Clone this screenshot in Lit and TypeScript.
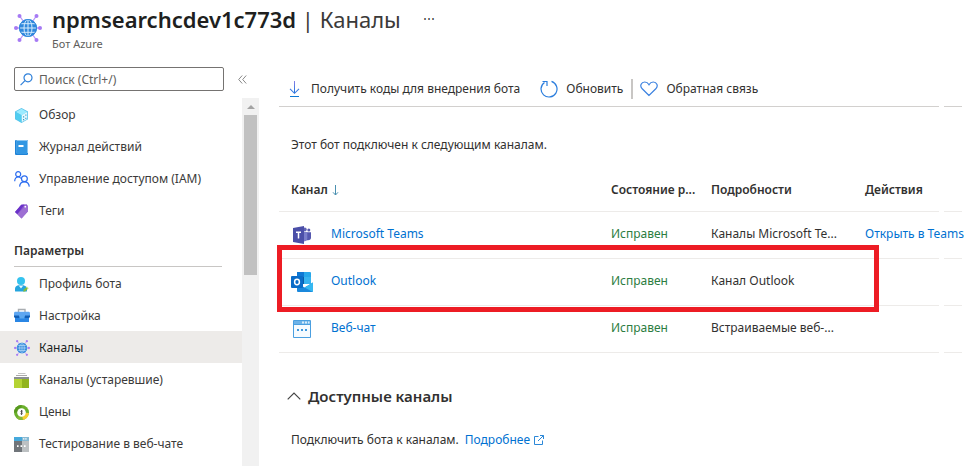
import { LitElement, html, svg, css, TemplateResult } from "lit";
import { customElement } from "lit/decorators.js";
import { classMap } from "lit/directives/class-map.js";

const icon = (size: number, box: number, body: TemplateResult) =>
  html`<svg width=${size} height=${size} viewBox="0 0 ${box} ${box}" aria-hidden="true">${body}</svg>`;

const network = svg`
  <g stroke="#b796f9" stroke-width="1.3">
    <path d="M6 2.5 22 25.5M22 2.5 6 25.5M2 14H26"/>
  </g>
  <g fill="#a67af4">
    <circle cx="5.5" cy="2" r="2"/><circle cx="22.5" cy="2" r="2"/>
    <circle cx="2" cy="14" r="2"/><circle cx="26" cy="14" r="2"/>
    <circle cx="5.5" cy="26" r="2"/><circle cx="22.5" cy="26" r="2"/>
  </g>
  <circle cx="14" cy="14" r="9" fill="#2f88dc"/>
  <g fill="none" stroke="#d5ecfc" stroke-width="1">
    <ellipse cx="14" cy="14" rx="4" ry="8.3"/>
    <path d="M14 5.5V22.5M5.5 14H22.5M7 9.7H21M7 18.3H21"/>
  </g>
  <circle cx="14" cy="14" r="8.5" fill="none" stroke="#2f88dc"/>`;

const icons: Record<string, TemplateResult> = {
  overview: icon(15, 15, svg`
    <path d="M7.5 0 14 3.6V11.3L7.5 15 1 11.3V3.6Z" fill="#59c3ea"/>
    <path d="M7.5.8 13.2 4 7.5 7.2 1.8 4Z" fill="#9cebff"/>
    <path d="M7.5 7.2 13.2 4V11L7.5 14.2Z" fill="#e6f8fd"/>
    <path d="M1.8 4 7.5 7.2V14.2L1.8 11Z" fill="#50cdf0"/>
    <path d="M9 8.3h1.2v1.2H9zM11.3 6.6h1.1v1.2h-1.1zM9 11h1.2v1.2H9zM11.3 9.7h1.1v1.2h-1.1z" fill="#3a9cc8"/>`),
  log: icon(15, 15, svg`
    <rect x="1" y="0" width="13" height="15" rx="1" fill="#1f83d6"/>
    <path d="M2.5 0H13Q14 0 14 1V13H2.5Z" fill="#8cc6f0"/>
    <path d="M2.5 1H13V14H2.5Z" fill="#3297e3"/>
    <path d="M4.5 5H9.5V7H4.5Z" fill="#fff"/>`),
  access: icon(16, 16, svg`
    <g fill="none" stroke="#2b6cf0" stroke-width="1.2">
      <circle cx="4.2" cy="3.2" r="2.5"/><path d="M.7 10.3C.8 7.5 2 6 4.2 6c1.2 0 2.1.5 2.8 1.3"/>
      <circle cx="10.4" cy="7.8" r="2.9"/><path d="M5.6 15.6c.2-3 1.8-4.8 4.7-4.8s4.7 1.8 5 4.8"/>
    </g>`),
  tags: icon(15, 15, svg`
    <path d="M1 8 7.3.8 12.6.3 14 2 13.8 7.5 7.5 14.5Z" fill="#8c5bce"/>
    <path d="M1 8 7.3.8 10.5.5 3.4 10.2Z" fill="#6a32c9"/>
    <path d="M3.5 9.9 11 2.6 14 2 13.8 7.5 7.5 14.5Z" fill="#9d6fd3"/>
    <circle cx="11.3" cy="2.7" r=".9" fill="#fff"/>`),
  profile: icon(15, 15, svg`
    <path d="M1 14V12C1 9.4 3.2 8 7 8s6 1.6 6 4v2q0 .5-.7.5H1.7Q1 14.5 1 14Z" fill="#25a5de"/>
    <circle cx="7" cy="4" r="4" fill="#35c3ef"/>
    <path d="M4.7 8.4 7 11.5 9.3 8.4Z" fill="#e8f8fd"/>
    <path d="M9.2 14.8 9.8 12.5 12.8 9.7 14.5 11.3 11.4 14.2Z" fill="#86bd3a"/>
    <path d="M12.2 10.2 13 9.5 14.6 11.1 13.8 11.9Z" fill="#d8e8a0"/>`),
  config: icon(16, 16, svg`
    <path d="M4.5 4V1.5H11V4" fill="none" stroke="#a9adb1" stroke-width="1.4"/>
    <path d="M0 5.5Q0 3.8 1 3.8H15Q16 3.8 16 5.5V8H0Z" fill="#5da6f1"/>
    <path d="M1 8H15V14H1Z" fill="#2a86e4"/>
    <path d="M0 7.6H5V9.2H11V7.6H16V9L15 10H1L0 9Z" fill="#125fb6"/>
    <path d="M5.5 7.5H10.5V10.5H5.5Z" fill="#5ca8ee"/>`),
  channels: icon(16, 28, network),
  legacy: icon(15, 15, svg`
    <path d="M4 .5H11.5" stroke="#c4c4c4"/><path d="M2 2.5H13" stroke="#a9a9a9"/>
    <path d="M0 4H15V6H0Z" fill="#8a8f91"/><path d="M0 6H8V15H0Z" fill="#b4d334"/>
    <path d="M8 6H15V15H8Z" fill="#92b41e"/>`),
  prices: icon(15, 15, svg`
    <circle cx="7.5" cy="7.5" r="7.5" fill="#6bb02c"/>
    <path d="M7.5 7.5 15 8A7.5 7.5 0 0 1 7 15Z" fill="#f5ce2f"/>
    <path d="M0 7.5A7.5 7.5 0 0 1 7.5 0V7.5Z" fill="#57991f"/>
    <path d="M7.5 7.5 2.7 13.2A7.5 7.5 0 0 0 9 14.9Z" fill="#87b939"/>
    <circle cx="7.5" cy="7.5" r="4.3" fill="#fff"/>
    <path d="M8.7 6.2Q7.5 5.4 6.9 6.3c-.3 1.1 1.6 1 1.4 2.1Q7.7 9.3 6.5 8.7M7.6 5V10" fill="none" stroke="#333" stroke-width=".8"/>`),
  test: icon(15, 15, svg`
    <path d="M0 0H8V4H0Z" fill="#45a9dc"/><path d="M8 0H15V4H8Z" fill="#86b9d3"/>
    <path d="M0 4H8V15H0Z" fill="#70757a"/><path d="M8 4H15V15H8Z" fill="#bcc0c2"/>
    <path d="M9 1.2h1.4v1.4H9zM11.2 1.2h1.4v1.4h-1.4z" fill="#fff"/>
    <path d="M3 8.3h1.6v1.6H3zM6.5 8.3h1.6v1.6H6.5zM10 8.3h1.6v1.6H10z" fill="#fff"/>`),
  search: icon(13, 13, svg`
    <g fill="none" stroke="#2f80da" stroke-width="1.2"><circle cx="8" cy="4.8" r="4"/><path d="M5 7.6.6 12.2"/></g>`),
  download: icon(18, 18, svg`
    <defs><linearGradient id="down" x1="0" y1="0" x2="0" y2="1"><stop stop-color="#8a7ee8"/><stop offset="1" stop-color="#1878da"/></linearGradient></defs>
    <path d="M9 1H10V13H9Z" fill="url(#down)"/>
    <path d="M5 8.8 9.5 13.3 14 8.8" fill="none" stroke="#3d7ae0" stroke-width="1.1"/>
    <path d="M5 16.5H14" stroke="#0f78d4"/>`),
  refresh: icon(18, 18, svg`
    <g fill="none" stroke="#2a7ddd" stroke-width="1.2"><path d="M11.5 1.4A8 8 0 1 1 4.5 2.4"/><path d="M2.5 1.5H7V6"/></g>`),
  heart: icon(18, 18, svg`
    <path d="M9 15.5 2.2 8.8C-.8 5.5 1.5 2 4.7 2 6.7 2 8 3 9 4.7 10 3 11.3 2 13.3 2 16.5 2 18.8 5.5 15.8 8.8Z" fill="none" stroke="#3c82e0" stroke-width="1.2"/>`),
  teams: icon(20, 20, svg`
    <circle cx="13.8" cy="4.5" r="1.9" fill="#6264b4"/><circle cx="17.8" cy="5" r="1.5" fill="#5558af"/>
    <path d="M12 7.3H20V12.5Q20 15.3 17 15.3H12Z" fill="#5558af"/>
    <path d="M12 7.3H16.3V13.5Q16.3 16.5 12 16.5Z" fill="#7b7fcb"/>
    <path d="M2 3 13 1V19L2 17Z" fill="#4b4fa8"/>
    <path d="M5 7.2H10M7.5 7.2V13.5" stroke="#fff" stroke-width="1.5" fill="none"/>`),
  outlook: icon(22, 22, svg`
    <path d="M6 2Q6 1 7 1H19Q20 1 20 2V13H6Z" fill="#28a8ea"/>
    <path d="M6 1H13V6H6Z" fill="#0f78d4"/><path d="M6 6H13V13H6Z" fill="#0a5ea8"/>
    <path d="M13 6H20V13H13Z" fill="#38b4f0"/>
    <path d="M6 12 13.5 16.5 22 11.5V20Q22 21 21 21H7Q6 21 6 20Z" fill="#1a88dc"/>
    <path d="M13.5 16.5 22 11.5V20Q22 20.5 21.5 20.8Z" fill="#35b8f1"/>
    <rect x="0" y="5" width="12" height="12" rx="1" fill="#0a6cc8"/>
    <ellipse cx="6" cy="11" rx="2.4" ry="2.7" fill="none" stroke="#fff" stroke-width="1.5"/>`),
  webchat: icon(20, 20, svg`
    <path d="M2.500 1.500H19.500V18.500H2.500Z" fill="#f6fbff" stroke="#4a9fe0"/>
    <path d="M3 2H19V5H3Z" fill="#6cb2e8"/><path d="M11 2.500h2v2h-2zM14 2.500h2v2h-2zM17 2.500h1.500v2H17z" fill="#d8edfb"/>
    <path d="M2 5.500H20" stroke="#4a9fe0"/>
    <path d="M6 10h2v2H6zM10 10h2v2h-2zM14 10h2v2h-2z" fill="#3f98dd"/>`),
  chevron: icon(14, 14, svg`<path d="M.7 10.3 7 4 13.3 10.3" fill="none" stroke="#444" stroke-width="1.2"/>`),
  external: icon(10, 10, svg`
    <path d="M4.5 1.5H.5V9.5H8.5V5.5M6 .5H9.5V4M9.5.5 4 6" fill="none" stroke="#2b88d8"/>`),
  collapse: icon(9, 9, svg`<path d="M4.2.5.7 4.5 4.2 8.5M8.2.5 4.7 4.5 8.2 8.5" fill="none" stroke="#888"/>`),
  sort: icon(12, 12, svg`<path d="M5.5 1V11M3 8.3 5.5 11 8 8.3" fill="none" stroke="#4a90b0"/>`),
};

const general = [
  ["overview", "Обзор"],
  ["log", "Журнал действий"],
  ["access", "Управление доступом (IAM)"],
  ["tags", "Теги"],
];
const settings = [
  ["profile", "Профиль бота"],
  ["config", "Настройка"],
  ["channels", "Каналы"],
  ["legacy", "Каналы (устаревшие)"],
  ["prices", "Цены"],
  ["test", "Тестирование в веб-чате"],
];
const channels = [
  { icon: "teams", name: "Microsoft Teams", details: "Каналы Microsoft Te...", action: "Открыть в Teams" },
  { icon: "outlook", name: "Outlook", details: "Канал Outlook", action: "" },
  { icon: "webchat", name: "Веб-чат", details: "Встраиваемые веб-...", action: "" },
];

@customElement("app-root")
export class AppRoot extends LitElement {
  static styles = css`
    :host {
      display: flex;
      flex-direction: column;
      min-height: 100vh;
      overflow: hidden;
      background: #fff;
      color: #323130;
      font: 12px/16px "Noto Sans", "Open Sans", sans-serif;
    }
    * { box-sizing: border-box; }
    svg { display: block; flex: none; }
    button { font: inherit; color: inherit; background: none; border: 0; padding: 0; }
    a { color: #0071d1; text-decoration: none; }
    h1, h2, p, ul { margin: 0; padding: 0; font-weight: 400; }
    ul { list-style: none; }

    .header { display: flex; height: 58px; padding: 4px 14px; gap: 10px; }
    .logo { padding-top: 10px; }
    .title-row { display: flex; align-items: center; gap: 20px; }
    .title { font-size: 22px; line-height: 30px; white-space: nowrap; color: #3b3a39; }
    .title b { font-weight: 600; color: #201f1e; }
    .more { height: 24px; width: 16px; }
    .subtitle { margin-top: 2px; font-size: 11px; color: #605e5c; }

    .body { display: flex; flex: 1; }
    .side { width: 259px; flex: none; display: flex; flex-direction: column; }
    .search-row { display: flex; align-items: center; gap: 14px; height: 40px; padding: 2px 0 0 14px; }
    .search { display: flex; align-items: center; gap: 6px; width: 210px; height: 24px; padding: 0 5px; border: 1px solid #757371; border-radius: 2px; }
    .search input { flex: 1; min-width: 0; border: 0; outline: 0; padding: 1px 0 0; background: none; font: inherit; color: #605e5c; }
    .search input::placeholder { color: #605e5c; opacity: 1; }
    .side-scroll { display: flex; flex: 1; }
    .nav { flex: 1; }
    .item { display: flex; align-items: center; height: 32px; padding: 2px 0 0 14px; color: #3b3a39; white-space: nowrap; }
    .item.on { background: #edebe9; color: #201f1e; }
    .glyph { width: 25px; flex: none; }
    .group { margin: 13px 20px 0 14px; height: 28px; font-size: 12px; line-height: 24px; font-weight: 600; border-bottom: 1px solid #c8c6c4; }
    .bar { width: 17px; background: #f1f1f1; display: flex; flex-direction: column; align-items: center; }
    .up { width: 0; height: 0; margin: 7px 0 6px; border: 4px solid transparent; border-top: 0; border-bottom-color: #a3a3a3; }
    .thumb { width: 13px; height: 160px; background: #c1c1c1; }

    .main { flex: 1; min-width: 0; padding: 12px 3px 0 20px; }
    .tools { display: flex; align-items: center; height: 36px; padding: 2px 0 0 6px; white-space: nowrap; }
    .tool { display: flex; align-items: center; gap: 8px; color: #323130; }
    .tool + .tool { margin-left: 20px; }
    .sep { width: 2px; height: 20px; margin: 0 7px 0 8px; background: #c8c6c4; }
    .rule { display: flex; gap: 5px; }
    .rule span { height: 1px; background: #d2d0ce; flex: 1; }
    .rule .end { flex: 0 0 18px; }
    .intro { padding: 30px 12px 15px; }
    .board { position: relative; }
    .grid { width: 100%; table-layout: fixed; border-collapse: collapse; text-align: left; }
    .grid th, .grid td { height: 47px; padding: 0 0 2px 12px; border-bottom: 1px solid #edebe9; white-space: nowrap; font-weight: 400; }
    .grid thead th { height: 43px; padding: 2px 0 0 12px; font-weight: 600; color: #323130; }
    .grid .gap { border: 0; padding: 0; }
    .c-state { width: 100px; }
    .c-details { width: 154px; }
    .c-actions { width: 86px; }
    .c-gap { width: 5px; }
    .c-end { width: 18px; }
    .sort { display: flex; align-items: center; gap: 2px; font-weight: 600; }
    .channel { display: flex; align-items: center; height: 24px; }
    .badge { width: 40px; display: flex; }
    .badge svg { margin-top: 2px; }
    .ok { color: #2c7d3f; }
    .mark { position: absolute; left: -2px; right: 83px; top: 77px; height: 67px; border: 5px solid #ed1c24; pointer-events: none; }
    .section { display: flex; align-items: center; gap: 7px; margin: 31px 0 24px 8px; font-size: 15px; line-height: 24px; font-weight: 600; }
    .more-text { display: flex; gap: 6px; padding-left: 12px; }
    .ext { display: flex; align-items: center; gap: 4px; }
  `;

  private items(list: string[][]) {
    return html`<ul>${list.map(([key, label]) => html`
      <li><a href="#${key}" class=${classMap({ item: true, on: key === "channels" })}>
        <span class="glyph">${icons[key]}</span>${label}</a></li>`)}</ul>`;
  }

  render() {
    return html`
      <header class="header">
        <div class="logo">${icon(28, 28, network)}</div>
        <div>
          <div class="title-row">
            <h1 class="title"><b>npmsearchcdev1c773d</b> | Каналы</h1>
            <button class="more" aria-label="Ещё">⋯</button>
          </div>
          <p class="subtitle">Бот Azure</p>
        </div>
      </header>
      <div class="body">
        <aside class="side">
          <div class="search-row">
            <label class="search">${icons.search}<input type="text" aria-label="Поиск" placeholder="Поиск (Ctrl+/)"></label>
            <button aria-label="Свернуть">${icons.collapse}</button>
          </div>
          <div class="side-scroll">
            <nav class="nav">
              ${this.items(general)}
              <h2 class="group">Параметры</h2>
              ${this.items(settings)}
            </nav>
            <div class="bar" aria-hidden="true"><span class="up"></span><span class="thumb"></span></div>
          </div>
        </aside>
        <main class="main">
          <div class="tools">
            <button class="tool">${icons.download}Получить коды для внедрения бота</button>
            <button class="tool">${icons.refresh}Обновить</button>
            <span class="sep"></span>
            <button class="tool">${icons.heart}Обратная связь</button>
          </div>
          <div class="rule"><span></span><span class="end"></span></div>
          <p class="intro">Этот бот подключен к следующим каналам.</p>
          <div class="board">
            <table class="grid">
              <colgroup><col><col class="c-state"><col class="c-details"><col class="c-actions"><col class="c-gap"><col class="c-end"></colgroup>
              <thead><tr>
                <th><button class="sort">Канал ${icons.sort}</button></th>
                <th>Состояние р...</th>
                <th>Подробности</th><th>Действия</th><th class="gap"></th><th></th>
              </tr></thead>
              <tbody>${channels.map((c) => html`<tr>
                <td><a href="#${c.icon}" class="channel"><span class="badge">${icons[c.icon]}</span>${c.name}</a></td>
                <td class="ok">Исправен</td>
                <td>${c.details}</td>
                <td>${c.action ? html`<a href="#open">${c.action}</a>` : ""}</td>
                <td class="gap"></td><td></td>
              </tr>`)}</tbody>
            </table>
            <div class="mark"></div>
          </div>
          <h2><button class="section">${icons.chevron}Доступные каналы</button></h2>
          <p class="more-text">Подключить бота к каналам. <a href="#more" class="ext">Подробнее ${icons.external}</a></p>
        </main>
      </div>`;
  }
}
